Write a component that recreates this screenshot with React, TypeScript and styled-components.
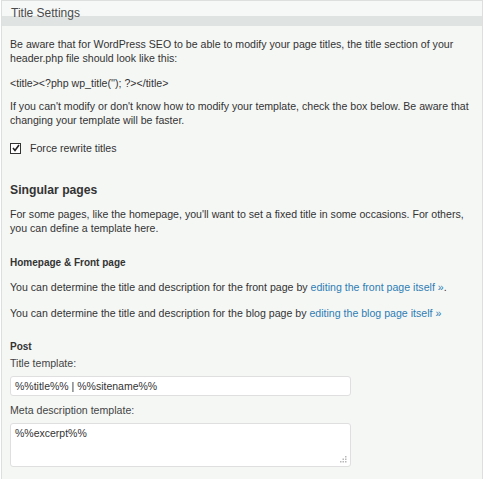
import React from 'react';
import styled, { createGlobalStyle } from 'styled-components';

const GlobalStyle = createGlobalStyle`
  html, body {
    margin: 0;
    padding: 0;
    background: #ffffff;
  }
  body {
    font-family: "Liberation Sans", Arial, sans-serif;
    color: #333333;
  }
`;

const Panel = styled.div`
  width: 482px;
  height: 479px;
  margin-left: 1px;
  box-sizing: border-box;
  border: 1px solid #dcdfdd;
  border-bottom: none;
  background: #f5f7f5;
  overflow: hidden;
`;

const PanelHeader = styled.div`
  height: 25px;
  background: linear-gradient(to bottom, #f6f8f7 0px, #f6f8f7 15px, #dfe3e2 15px, #dfe3e2 25px);
  padding-left: 9px;
  font-size: 12px;
  line-height: 25px;
  color: #4a4a4a;
  & > span {
    position: relative;
    top: 0px;
  }
`;

const Body = styled.div`
  padding: 0 8px;
`;

const Text = styled.p<{ $top: number }>`
  margin: ${(p) => p.$top}px 0 0;
  font-size: 10.6px;
  line-height: 14px;
  color: #333333;
`;

const Link = styled.a`
  color: #2e7db3;
  text-decoration: none;
`;

const CheckRow = styled.label`
  display: flex;
  align-items: center;
  gap: 9px;
  margin-top: 14px;
  height: 14px;
  font-size: 10.6px;
  color: #333333;
`;

const CheckBox = styled.span`
  width: 9px;
  height: 9px;
  border: 1px solid #333333;
  background: #ffffff;
  display: flex;
  align-items: center;
  justify-content: center;
`;

const SectionTitle = styled.h3<{ $top: number }>`
  margin: ${(p) => p.$top}px 0 0;
  font-size: 12.2px;
  line-height: 16px;
  font-weight: bold;
  color: #333333;
`;

const SubTitle = styled.h4<{ $top: number }>`
  margin: ${(p) => p.$top}px 0 0;
  font-size: 10px;
  line-height: 14px;
  font-weight: bold;
  color: #333333;
`;

const FieldLabel = styled.div<{ $top: number }>`
  margin-top: ${(p) => p.$top}px;
  font-size: 10.6px;
  line-height: 14px;
  color: #444444;
`;

const TextInput = styled.input`
  display: block;
  margin-top: 6px;
  width: 341px;
  height: 20px;
  box-sizing: border-box;
  border: 1px solid #dfdfdf;
  border-radius: 3px;
  background: #ffffff;
  padding: 0 4px;
  font-family: "Liberation Sans", Arial, sans-serif;
  font-size: 10.5px;
  color: #333333;
  outline: none;
`;

const AreaWrap = styled.div`
  position: relative;
  width: 341px;
  margin-top: 6px;
`;

const TextArea = styled.textarea`
  display: block;
  width: 341px;
  height: 44px;
  box-sizing: border-box;
  border: 1px solid #dfdfdf;
  border-radius: 3px;
  background: #ffffff;
  padding: 3px 4px;
  font-family: "Liberation Sans", Arial, sans-serif;
  font-size: 10.5px;
  color: #333333;
  outline: none;
  resize: none;
`;

const Grip = styled.svg`
  position: absolute;
  right: 4px;
  bottom: 4px;
`;

export default function App() {
  return (
    <>
      <GlobalStyle />
      <Panel>
        <PanelHeader>
          <span>Title Settings</span>
        </PanelHeader>
        <Body>
          <Text $top={11}>
            Be aware that for WordPress SEO to be able to modify your page titles, the title section of your
            header.php file should look like this:
          </Text>
          <Text $top={11}>{"<title><?php wp_title(''); ?></title>"}</Text>
          <Text $top={9}>
            If you can't modify or don't know how to modify your template, check the box below. Be aware that
            changing your template will be faster.
          </Text>
          <CheckRow>
            <CheckBox>
              <svg width="8" height="8" viewBox="0 0 8 8">
                <path d="M1 4 L3 6.5 L7 1" fill="none" stroke="#222" strokeWidth="1.6" />
              </svg>
            </CheckBox>
            Force rewrite titles
          </CheckRow>
          <SectionTitle $top={27}>Singular pages</SectionTitle>
          <Text $top={9}>
            For some pages, like the homepage, you'll want to set a fixed title in some occasions. For others,
            you can define a template here.
          </Text>
          <SubTitle $top={21}>Homepage &amp; Front page</SubTitle>
          <Text $top={10}>
            You can determine the title and description for the front page by{' '}
            <Link href="#">editing the front page itself »</Link>.
          </Text>
          <Text $top={12}>
            You can determine the title and description for the blog page by{' '}
            <Link href="#">editing the blog page itself »</Link>
          </Text>
          <SubTitle $top={20}>Post</SubTitle>
          <FieldLabel $top={2}>Title template:</FieldLabel>
          <TextInput defaultValue="%%title%% | %%sitename%%" />
          <FieldLabel $top={7}>Meta description template:</FieldLabel>
          <AreaWrap>
            <TextArea defaultValue="%%excerpt%%" />
            <Grip width="7" height="7" viewBox="0 0 7 7">
              <rect x="5" y="0" width="1.5" height="1.5" fill="#b8b8b8" />
              <rect x="2.5" y="2.5" width="1.5" height="1.5" fill="#b8b8b8" />
              <rect x="5" y="2.5" width="1.5" height="1.5" fill="#b8b8b8" />
              <rect x="0" y="5" width="1.5" height="1.5" fill="#b8b8b8" />
              <rect x="2.5" y="5" width="1.5" height="1.5" fill="#b8b8b8" />
              <rect x="5" y="5" width="1.5" height="1.5" fill="#b8b8b8" />
            </Grip>
          </AreaWrap>
        </Body>
      </Panel>
    </>
  );
}
